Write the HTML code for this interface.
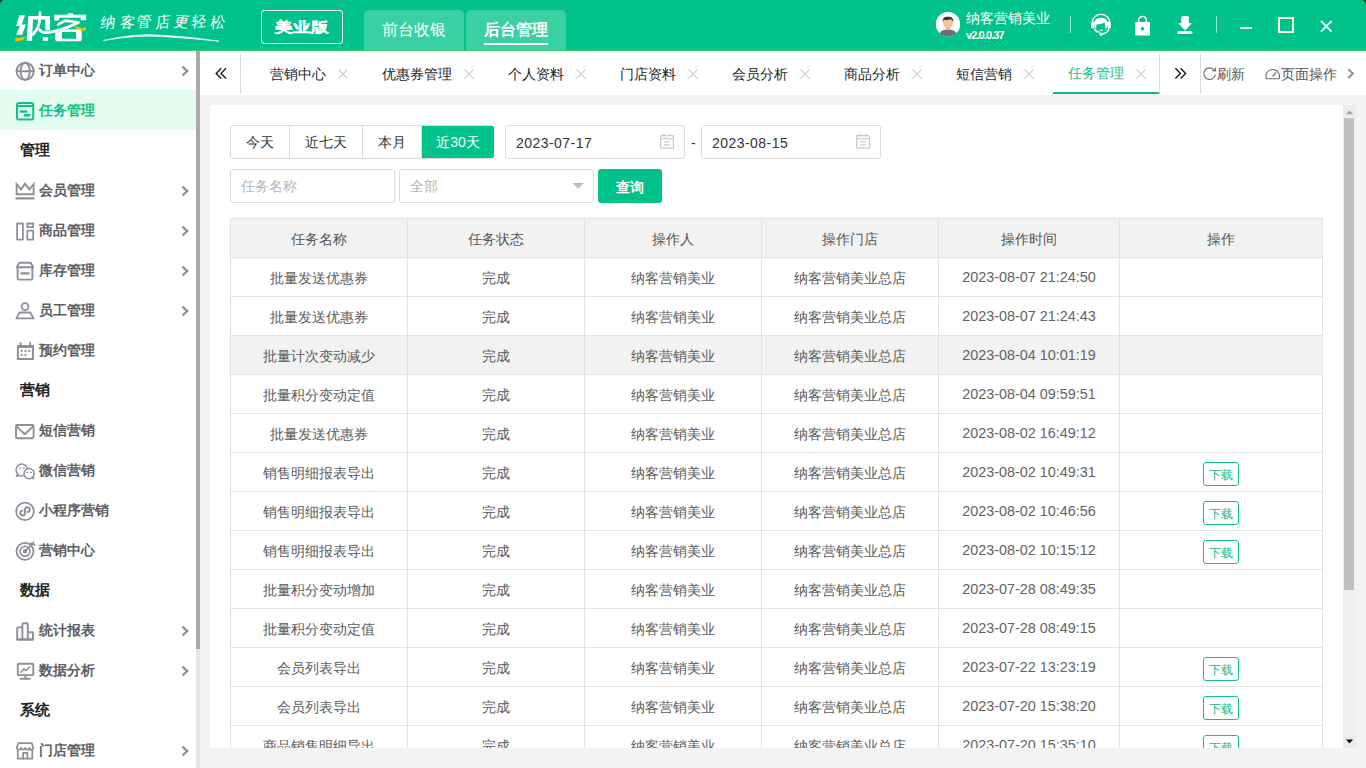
<!DOCTYPE html><html><head><meta charset="utf-8"><style>*{margin:0;padding:0;box-sizing:border-box}
html,body{width:1366px;height:768px;overflow:hidden;background:#f3f3f3;font-family:"Liberation Sans",sans-serif;position:relative}
#hdr{position:absolute;left:0;top:0;width:1366px;height:51px;background:#02c28c;border-bottom:1px solid #3cd06a}
#mybox{position:absolute;left:261px;top:10px;width:82px;height:34px;border:1px solid #fff;border-radius:3px}
#mybox span{position:absolute;left:0;width:80px;top:0;text-align:center;color:#fff;font-size:17.5px;font-weight:bold;line-height:32px;-webkit-text-stroke:0.5px #fff;transform:scaleY(0.8);letter-spacing:0px}
.hbtn{position:absolute;top:10px;height:40px;width:100px;background:#3ad0a2;border-radius:5px 5px 0 0;color:#fff;font-size:16px;text-align:center;line-height:40px}
.hbtn.act{font-weight:bold}
.hbtn.act i{position:absolute;left:18px;top:33px;width:64px;height:2px;background:#fff}
#avatar{position:absolute;left:936px;top:12px;width:24px;height:24px;border-radius:50%;background:#fff}
#uname{position:absolute;left:966px;top:10px;font-size:14px;color:#fff;line-height:16px}
#ver{position:absolute;left:966px;top:29px;font-size:11px;color:#fff;line-height:12px;letter-spacing:-0.9px;font-weight:bold}
.hsep{position:absolute;top:16px;width:1px;height:17px;background:rgba(255,255,255,.6)}
#side{position:absolute;left:0;top:51px;width:196px;height:717px;background:#fff;overflow:hidden}
.mi{position:absolute;left:0;width:196px;height:40px;line-height:40px;font-size:14px;color:#5e5e66;font-weight:bold}
.mi.act{background:#e3fcef;color:#14c08a}
.mi .t{position:absolute;left:39px;top:0}
.mi .ic{position:absolute;left:15px;top:10px;width:20px;height:20px;line-height:0}
.mi svg{display:block}
.mi .ch{position:absolute;left:180px;top:14px;line-height:0}
.sec{position:absolute;left:20px;height:40px;line-height:40px;font-size:15px;color:#222;font-weight:bold}
#sbar{position:absolute;left:196px;top:51px;width:4px;height:717px;background:#e6e6e6;border-radius:2px}
#sthumb{position:absolute;left:196px;top:51px;width:4px;height:598px;background:#aaaaaa}
#tabs{position:absolute;left:200px;top:51px;width:1166px;height:44px;background:#fff}
#dbl,#dbr{position:absolute;top:0;left:14px;line-height:42px;font-size:22px;color:#222}
#dbr{left:973px}
.vsep{position:absolute;top:3px;width:1px;height:40px;background:#ddd}
.tab{position:absolute;top:1px;height:44px;line-height:44px;font-size:14px;color:#1e1e1e;font-weight:300}
.tab.on{color:#14c08a;top:0}
.tx{position:absolute;top:18px}
#uline{position:absolute;left:853px;top:41px;width:106px;height:2px;background:#14b87f}
#refresh{position:absolute;left:1017px;top:1px;font-weight:300;line-height:44px;font-size:14px;color:#555}
#pageop{position:absolute;left:1081px;top:1px;font-weight:300;line-height:44px;font-size:14px;color:#555}
#panel{position:absolute;left:210px;top:105px;width:1133px;height:643px;background:#fff;overflow:hidden}
.bg{position:absolute;height:34px;border:1px solid #dcdcdc;border-radius:3px;background:#fff;font-size:14px;color:#333;font-weight:300}
.bg span{position:absolute;top:0;height:32px;line-height:32px;text-align:center;border-right:1px solid #dcdcdc}
.bg span.on{background:#02c28c;color:#fff;border-right:0;top:0;height:32px;line-height:32px;width:72px!important;border-radius:0 2px 2px 0}
.date{position:absolute;width:180px;height:34px;border:1px solid #dcdcdc;border-radius:3px;padding-left:10px;line-height:34px;font-size:14px;color:#333;letter-spacing:0.45px}
#dash{position:absolute;left:481px;top:21px;line-height:34px;font-size:14px;color:#333}
.inp{position:absolute;height:34px;border:1px solid #dcdcdc;border-radius:3px;background:#fff;font-size:14px;line-height:32px;padding-left:10px}
#query{position:absolute;left:388px;top:64px;width:64px;height:34px;background:#02c28c;border-radius:3px;color:#fff;font-size:14px;font-weight:bold;text-align:center;line-height:36px}
table{position:absolute;left:20px;top:113px;border-collapse:collapse;table-layout:fixed}
td i,th i{font-style:normal;position:relative;top:2px}
td.num{font-size:14.4px;color:#636363}
td.num b{font-weight:normal}
td,th{border:1px solid #e3e3e3;height:39px;text-align:center;font-size:14px;color:#5c5c5c;font-weight:300;padding:0;white-space:nowrap;overflow:hidden}
th{background:#f2f2f2;color:#555}
tr.hov td{background:#f2f2f2}
.dl{display:inline-block;position:relative;top:2px;width:36px;height:24px;border:1px solid #14c08a;border-radius:3px;color:#14b985;font-size:12px;line-height:22px;text-align:center;vertical-align:middle}
.dl i{top:1px!important}
#vscroll{position:absolute;left:1343px;top:105px;width:13px;height:643px;background:#f0f0f0}
#vscroll .thumb{position:absolute;left:1px;top:13px;width:10px;height:472px;background:#c0c0c0}
#tagline{position:absolute;left:0;top:0}
#tagline span{position:absolute;top:11px;height:22px;line-height:22px;text-align:center;font-family:"Liberation Serif",serif;font-size:15px;font-weight:200;color:#fff}
</style></head><body>
<div id="hdr">
<svg id="logo" width="240" height="50" viewBox="0 0 240 50" style="position:absolute;left:0;top:0"><g fill="#fff"><path d="M19.3 15.3H25L21.8 24.6H26L22.1 34.7H16.3L19.7 26.1H16.1Z"/><path d="M28.4 16H33.2L32 40.8H26.5Z"/><path d="M28.4 16H50V30.6H45.3V19.6H28.4Z"/><rect x="42.8" y="36.9" width="5.3" height="3.9"/><path d="M54.3 14.7H67.8V13.3H73V14.7H86.1V20.2H80.8V17.8H59.2V20.5H54.3Z"/><path fill-rule="evenodd" d="M57 29.2H80Q81.7 29.2 81.7 31V39.5Q81.7 41.3 80 41.3H57Q55.2 41.3 55.2 39.5V31Q55.2 29.2 57 29.2ZM62 32.1V38.8H76V32.1Z"/></g><g fill="none" stroke="#fff" stroke-linecap="round"><path d="M40.1 12.6L39.6 20Q39 28 33 34.5" stroke-width="2.8"/><path d="M58 24.6L65.3 20.6L78.2 22.2" stroke-width="2.6"/><path d="M78.4 22.5Q61 31 47 32.6Q41.5 33 38.8 29" stroke-width="3" stroke="#02c28c"/><path d="M78.4 22.5Q61 31 47 32.6Q41.5 33 38.8 29" stroke-width="2.8"/></g><path d="M15 38.2Q20 38 25.5 36.4Q24.5 39.5 20.5 40.8Q17.5 41.5 15.2 41.2Z" fill="#f6bd00"/><path d="M74 26.3Q78 26 80.5 27.8Q83 28.4 86.1 27.3L85.7 30.6Q81.5 30.8 78.5 29.6Q76 28.5 74 26.3Z" fill="#f6bd00"/><path d="M103.5 40.5Q135 33 161.5 35.2Q190 36.5 219 41.2Q190 38.2 161.5 36.4Q135 35 103.5 40.5Z" fill="#fff" stroke="#fff" stroke-width="0.7"/></svg>
<div id="tagline"><span style="left:99.6px;width:16.4px;transform:rotate(-4deg) skewX(-10deg)">纳</span><span style="left:118.6px;width:16.4px;transform:rotate(3deg) skewX(-10deg)">客</span><span style="left:137.0px;width:15.0px;transform:rotate(-3deg) skewX(-10deg)">管</span><span style="left:155.0px;width:15.0px;transform:rotate(-6deg) skewX(-10deg)">店</span><span style="left:173.5px;width:15.5px;transform:rotate(4deg) skewX(-10deg)">更</span><span style="left:191.4px;width:16.3px;transform:rotate(-3deg) skewX(-10deg)">轻</span><span style="left:209.8px;width:16.2px;transform:rotate(-5deg) skewX(-10deg)">松</span></div>
<div id="mybox"><span>美业版</span></div>
<div class="hbtn" style="left:364px">前台收银</div>
<div class="hbtn act" style="left:466px">后台管理<i></i></div>
<div id="avatar"></div>
<div id="uname">纳客营销美业</div><div id="ver">v2.0.0.37</div>
<div class="hsep" style="left:1070px"></div><div class="hsep" style="left:1216px"></div>
<svg id="hicons" width="1366" height="50" viewBox="0 0 1366 50" style="position:absolute;left:0;top:0"><g fill="none" stroke="#fff" stroke-width="1.5"><path d="M1092.2 23A8.8 8.8 0 0 1 1109.8 23"/><path d="M1094.3 28.5Q1096 32.5 1099.5 31.8"/><path d="M1109 28Q1108.5 33 1101.2 34.3"/></g><g fill="#fff"><rect x="1091" y="22" width="3.4" height="6.2" rx="1"/><rect x="1107.5" y="22" width="3.4" height="6.2" rx="1"/><path d="M1094.2 24.5Q1094 17.8 1101 17.8Q1108 17.8 1107.6 24.5L1106 30.5Q1105.2 26 1104.4 22.3Q1102 24.5 1096.5 24.6Q1096 26.5 1096.3 29.2Q1094.5 27.5 1094.2 24.5Z"/><circle cx="1101" cy="34.2" r="1.6"/><rect x="1099.5" y="29.7" width="3.5" height="0.9"/></g><path d="M1138.6 22.5V20.3A3.9 3.9 0 0 1 1146.4 20.3V22.5" fill="none" stroke="#fff" stroke-width="1.5"/><rect x="1135.1" y="22" width="14.9" height="13.4" rx="1" fill="#fff"/><circle cx="1142.6" cy="28.7" r="1.7" fill="#02c28c"/><path d="M1181.3 23.3V17.4Q1181.3 15.9 1182.8 15.9H1187.4Q1188.9 15.9 1188.9 17.4V23.3H1191.8L1185.1 30.5L1178.2 23.3Z" fill="#fff"/><rect x="1177.4" y="31" width="15.1" height="3.1" rx="1.5" fill="#fff"/><rect x="1240" y="27" width="12" height="2" fill="#fff"/><rect x="1279" y="18" width="14" height="14" fill="none" stroke="#fffbe0" stroke-width="2"/><path d="M1321 21L1331.6 31.6M1331.6 21L1321 31.6" stroke="#fff" stroke-width="1.8"/><circle cx="948" cy="24.5" r="12" fill="#fff"/><path d="M939.5 33.5Q941 29.5 948 29.5Q955 29.5 956.5 33.5Q953 36.5 948 36.5Q943 36.5 939.5 33.5Z" fill="#6d6d7c"/><rect x="946" y="26.5" width="4" height="3.5" fill="#eab792"/><ellipse cx="948" cy="22.8" rx="5" ry="5.6" fill="#f4c29f"/><path d="M942.5 22.5Q942 16.5 948 16.8Q954 16.5 953.5 22.5Q952.8 19.5 950.5 19.3Q947 20.5 944 19.8Q943 20.5 942.5 22.5Z" fill="#333"/></svg>
<svg width="1366" height="5" style="position:absolute;left:0;top:0"><path d="M0 0H4Q2 0.3 1 1.5Q0.2 2.5 0 4Z" fill="#2b1f1a"/><path d="M1366 0H1362Q1364 0.3 1365 1.5Q1365.8 2.5 1366 4Z" fill="#2b1f1a"/></svg>
</div>
<div id="side">
<div class="mi" style="top:-1px"><span class="ic"><svg width="20" height="20" viewBox="0 0 20 20" style="overflow:visible" fill="none" stroke="#8f8f9a" stroke-width="1.9" stroke-linecap="round" stroke-linejoin="round"><circle cx="10.2" cy="11.3" r="8.6"/><ellipse cx="10.2" cy="11.3" rx="4.6" ry="8.6"/><path d="M1.6 11.3h17.2"/></svg></span><span class="t">订单中心</span><span class="ch"><svg width="10" height="14" viewBox="0 0 10 14"><path d="M2.5 2.7L7.2 7.1L2.5 11.5" fill="none" stroke="#8e8e9a" stroke-width="2.3"/></svg></span></div>
<div class="mi act" style="top:39px"><span class="ic"><svg width="20" height="20" viewBox="0 0 20 20" style="overflow:visible" fill="none" stroke="#14c08a" stroke-width="2" stroke-linecap="round" stroke-linejoin="round"><rect x="2" y="3" width="16.2" height="16.6" rx="2.2"/><path d="M2 6h16.2"/><path d="M5.8 11.5h5.4M9.8 15.2h4.6" stroke-width="2.4"/></svg></span><span class="t">任务管理</span></div>
<div class="sec" style="top:79px">管理</div>
<div class="mi" style="top:119px"><span class="ic"><svg width="20" height="20" viewBox="0 0 20 20" style="overflow:visible" fill="none" stroke="#8f8f9a" stroke-width="1.9" stroke-linecap="round" stroke-linejoin="round"><path d="M1.6 14.2V4.2L6 9.4L10 3.6L14.4 9.4L18.6 4.2V14.2Z" stroke-linejoin="miter" stroke-linecap="butt"/><path d="M1.6 18.4h17" stroke-width="2.3"/></svg></span><span class="t">会员管理</span><span class="ch"><svg width="10" height="14" viewBox="0 0 10 14"><path d="M2.5 2.7L7.2 7.1L2.5 11.5" fill="none" stroke="#8e8e9a" stroke-width="2.3"/></svg></span></div>
<div class="mi" style="top:159px"><span class="ic"><svg width="20" height="20" viewBox="0 0 20 20" style="overflow:visible" fill="none" stroke="#8f8f9a" stroke-width="1.8" stroke-linecap="round" stroke-linejoin="round"><rect x="2.1" y="3.5" width="5.8" height="16.1"/><rect x="12.3" y="3.5" width="5.9" height="3.6"/><rect x="12.3" y="10.7" width="5.9" height="8.9"/></svg></span><span class="t">商品管理</span><span class="ch"><svg width="10" height="14" viewBox="0 0 10 14"><path d="M2.5 2.7L7.2 7.1L2.5 11.5" fill="none" stroke="#8e8e9a" stroke-width="2.3"/></svg></span></div>
<div class="mi" style="top:199px"><span class="ic"><svg width="20" height="20" viewBox="0 0 20 20" style="overflow:visible" fill="none" stroke="#8f8f9a" stroke-width="1.9" stroke-linecap="round" stroke-linejoin="round"><path d="M4.3 2.8H15.7L18.2 7.3H1.8Z"/><path d="M2.6 7.5V18.2Q2.6 19.6 4 19.6H16Q17.4 19.6 17.4 18.2V7.5"/><path d="M6.5 13.4h7" stroke-width="2.4"/></svg></span><span class="t">库存管理</span><span class="ch"><svg width="10" height="14" viewBox="0 0 10 14"><path d="M2.5 2.7L7.2 7.1L2.5 11.5" fill="none" stroke="#8e8e9a" stroke-width="2.3"/></svg></span></div>
<div class="mi" style="top:239px"><span class="ic"><svg width="20" height="20" viewBox="0 0 20 20" style="overflow:visible" fill="none" stroke="#8f8f9a" stroke-width="1.8" stroke-linecap="round" stroke-linejoin="round"><circle cx="10" cy="6.6" r="3.5"/><path d="M4.8 12.5H15.2L18.6 18.4H1.4Z"/></svg></span><span class="t">员工管理</span><span class="ch"><svg width="10" height="14" viewBox="0 0 10 14"><path d="M2.5 2.7L7.2 7.1L2.5 11.5" fill="none" stroke="#8e8e9a" stroke-width="2.3"/></svg></span></div>
<div class="mi" style="top:279px"><span class="ic"><svg width="20" height="20" viewBox="0 0 20 20" style="overflow:visible"><rect x="2.9" y="6" width="15" height="13" fill="none" stroke="#8f8f9a" stroke-width="2"/><rect x="2" y="5" width="16.9" height="3" fill="#8f8f9a"/><rect x="4.6" y="2.2" width="1.9" height="3" fill="#8f8f9a"/><rect x="14.2" y="2.2" width="1.9" height="3" fill="#8f8f9a"/><g fill="#8f8f9a"><rect x="5.7" y="9.9" width="2" height="2"/><rect x="9.5" y="9.9" width="2" height="2"/><rect x="13.2" y="9.9" width="2" height="2"/><rect x="5.7" y="13.9" width="2" height="2"/><rect x="9.5" y="13.9" width="2" height="2"/></g></svg></span><span class="t">预约管理</span></div>
<div class="sec" style="top:319px">营销</div>
<div class="mi" style="top:359px"><span class="ic"><svg width="20" height="20" viewBox="0 0 20 20" style="overflow:visible" fill="none" stroke="#8f8f9a" stroke-width="1.9" stroke-linecap="round" stroke-linejoin="round"><rect x="1" y="5" width="17.6" height="13.2" rx="1.2"/><path d="M1.8 6.6L9.8 14.2L17.8 6.6"/></svg></span><span class="t">短信营销</span></div>
<div class="mi" style="top:399px"><span class="ic"><svg width="20" height="20" viewBox="0 0 20 20" style="overflow:visible" fill="none" stroke="#8f8f9a" stroke-width="1.5" stroke-linecap="round" stroke-linejoin="round"><ellipse cx="6.8" cy="10" rx="5.7" ry="6"/><path d="M2.8 14.2L1.4 16.4L4.4 15.6" stroke-width="1.4"/><circle cx="14.1" cy="13.6" r="5.1" fill="#fff"/><path d="M17.8 17L18.8 18.6L17 18.2" stroke-width="1.4"/><path d="M4.9 8.3h.6M8.6 8.3h.6M11.7 12.4h.7M15.6 12.4h.7" stroke-width="1.4"/></svg></span><span class="t">微信营销</span></div>
<div class="mi" style="top:439px"><span class="ic"><svg width="20" height="20" viewBox="0 0 20 20" style="overflow:visible" fill="none" stroke="#8f8f9a" stroke-width="1.8" stroke-linecap="round" stroke-linejoin="round"><circle cx="10" cy="11.4" r="8.8"/><path d="M7.6 10.6A2.4 2.4 0 1 0 10 13V9.6A2.4 2.4 0 1 1 12.6 12" stroke-width="1.9"/></svg></span><span class="t">小程序营销</span></div>
<div class="mi" style="top:479px"><span class="ic"><svg width="20" height="20" viewBox="0 0 20 20" style="overflow:visible" fill="none" stroke="#8f8f9a" stroke-width="1.8" stroke-linecap="round" stroke-linejoin="round"><circle cx="10" cy="11.3" r="8.5"/><circle cx="10" cy="11.3" r="4.9"/><circle cx="10" cy="11.3" r="1.3" fill="#8f8f9a"/><path d="M10 11.3L17.5 3.8"/><path d="M15.3 3.3L17.6 3.6L18.6 2.1L18.2 4.7L19.8 5.3" stroke-width="1.5"/></svg></span><span class="t">营销中心</span></div>
<div class="sec" style="top:519px">数据</div>
<div class="mi" style="top:559px"><span class="ic"><svg width="20" height="20" viewBox="0 0 20 20" style="overflow:visible" fill="none" stroke="#8f8f9a" stroke-width="1.9" stroke-linecap="round" stroke-linejoin="round"><path d="M2.2 19.5V8.4Q2.2 7.4 3.2 7.4H7.4V19.5ZM7.4 19.5V4.3Q7.4 3.3 8.4 3.3H11.8Q12.8 3.3 12.8 4.3V19.5ZM12.8 19.5V12.2H17.9V19.5Z"/><path d="M2.2 19.5H17.9"/></svg></span><span class="t">统计报表</span><span class="ch"><svg width="10" height="14" viewBox="0 0 10 14"><path d="M2.5 2.7L7.2 7.1L2.5 11.5" fill="none" stroke="#8e8e9a" stroke-width="2.3"/></svg></span></div>
<div class="mi" style="top:599px"><span class="ic"><svg width="20" height="20" viewBox="0 0 20 20" style="overflow:visible" fill="none" stroke="#8f8f9a" stroke-width="1.9" stroke-linecap="round" stroke-linejoin="round"><rect x="2.8" y="3.8" width="15.5" height="11.3" rx="0.8"/><path d="M10.4 15.5V18.6M5.6 18.8H14.8" /><path d="M5.8 12.3L9 8.8L11 10.6L14.4 7.1" stroke-width="1.5"/></svg></span><span class="t">数据分析</span><span class="ch"><svg width="10" height="14" viewBox="0 0 10 14"><path d="M2.5 2.7L7.2 7.1L2.5 11.5" fill="none" stroke="#8e8e9a" stroke-width="2.3"/></svg></span></div>
<div class="sec" style="top:639px">系统</div>
<div class="mi" style="top:679px"><span class="ic"><svg width="20" height="20" viewBox="0 0 20 20" style="overflow:visible" fill="none" stroke="#8f8f9a" stroke-width="1.8" stroke-linecap="round" stroke-linejoin="round"><path d="M3.3 3.2H16.8L18.3 7.6V8.3Q18.2 9.6 16.6 9.6Q14.6 9.6 14.4 7.8Q14.2 9.6 12.4 9.6Q10.6 9.6 10.3 7.8Q10 9.6 8.2 9.6Q6.4 9.6 6.1 7.8Q5.8 9.6 3.8 9.6Q2.2 9.6 1.8 8.3V7.6Z"/><path d="M2.8 9.6V18.6H17.3V9.6"/><path d="M8.1 18.6V12.8H12.4V18.6"/></svg></span><span class="t">门店管理</span><span class="ch"><svg width="10" height="14" viewBox="0 0 10 14"><path d="M2.5 2.7L7.2 7.1L2.5 11.5" fill="none" stroke="#8e8e9a" stroke-width="2.3"/></svg></span></div>
</div>
<div id="sbar"></div><div id="sthumb"></div>
<div id="tabs">
<svg style="position:absolute;left:0;top:0" width="60" height="44" viewBox="200 51 60 44" fill="none" stroke="#1a1a1a" stroke-width="1.4"><path d="M221.2 68.2L216.2 73.4L221.2 78.6M226 68.2L221 73.4L226 78.6"/></svg><div class="vsep" style="left:40px"></div>
<div class="tab" style="left:70px">营销中心</div><svg class="tx" style="left:138px" width="10" height="10" viewBox="0 0 10 10"><path d="M0.6 0.6L9.4 9.4M9.4 0.6L0.6 9.4" stroke="#c6c6c6" stroke-width="1.1"/></svg>
<div class="tab" style="left:182px">优惠券管理</div><svg class="tx" style="left:264px" width="10" height="10" viewBox="0 0 10 10"><path d="M0.6 0.6L9.4 9.4M9.4 0.6L0.6 9.4" stroke="#c6c6c6" stroke-width="1.1"/></svg>
<div class="tab" style="left:308px">个人资料</div><svg class="tx" style="left:376px" width="10" height="10" viewBox="0 0 10 10"><path d="M0.6 0.6L9.4 9.4M9.4 0.6L0.6 9.4" stroke="#c6c6c6" stroke-width="1.1"/></svg>
<div class="tab" style="left:420px">门店资料</div><svg class="tx" style="left:488px" width="10" height="10" viewBox="0 0 10 10"><path d="M0.6 0.6L9.4 9.4M9.4 0.6L0.6 9.4" stroke="#c6c6c6" stroke-width="1.1"/></svg>
<div class="tab" style="left:532px">会员分析</div><svg class="tx" style="left:600px" width="10" height="10" viewBox="0 0 10 10"><path d="M0.6 0.6L9.4 9.4M9.4 0.6L0.6 9.4" stroke="#c6c6c6" stroke-width="1.1"/></svg>
<div class="tab" style="left:644px">商品分析</div><svg class="tx" style="left:712px" width="10" height="10" viewBox="0 0 10 10"><path d="M0.6 0.6L9.4 9.4M9.4 0.6L0.6 9.4" stroke="#c6c6c6" stroke-width="1.1"/></svg>
<div class="tab" style="left:756px">短信营销</div><svg class="tx" style="left:824px" width="10" height="10" viewBox="0 0 10 10"><path d="M0.6 0.6L9.4 9.4M9.4 0.6L0.6 9.4" stroke="#c6c6c6" stroke-width="1.1"/></svg>
<div class="tab on" style="left:868px">任务管理</div><svg class="tx" style="left:936px" width="10" height="10" viewBox="0 0 10 10"><path d="M0.6 0.6L9.4 9.4M9.4 0.6L0.6 9.4" stroke="#c6c6c6" stroke-width="1.1"/></svg>
<div id="uline"></div>
<div class="vsep" style="left:959px"></div><svg style="position:absolute;left:960px;top:0" width="40" height="44" viewBox="1160 51 40 44" fill="none" stroke="#1a1a1a" stroke-width="1.4"><path d="M1175.4 68.2L1180.4 73.4L1175.4 78.6M1180.6 68.2L1185.6 73.4L1180.6 78.6"/></svg><div class="vsep" style="left:1000px"></div>
<div id="refresh">刷新</div><div id="pageop">页面操作</div>
<svg width="1166" height="44" viewBox="200 51 1166 44" style="position:absolute;left:0;top:0" fill="none"><path d="M1214.3 70.2A5.8 5.8 0 1 0 1215.4 74.6" stroke="#6a6a6a" stroke-width="1.1"/><path d="M1212.3 70.6L1215.6 70.9L1215.3 67.5" stroke="#6a6a6a" stroke-width="1.1"/><path d="M1266.4 78.8A6.8 6.8 0 1 1 1279 78.8Z" stroke="#6a6a6a" stroke-width="1.1"/><path d="M1272.6 76.5L1276.2 72.3" stroke="#6a6a6a" stroke-width="1.2"/><path d="M1348.2 69.2L1353 73.6L1348.2 78" stroke="#8e8e9a" stroke-width="2"/></svg>
</div>
<div id="panel">
<div class="bg" style="left:20px;top:20px;width:264px"><span style="left:0;width:59px">今天</span><span style="left:59px;width:73px">近七天</span><span style="left:132px;width:59px">本月</span><span class="on" style="left:191px;width:73px">近30天</span></div>
<div class="date" style="left:295px;top:20px">2023-07-17<i class="cal"></i></div>
<div id="dash">-</div>
<div class="date" style="left:491px;top:20px">2023-08-15<i class="cal"></i></div>
<div class="inp" style="left:20px;top:64px;width:165px;color:#b5b5b5">任务名称</div>
<div class="inp" style="left:189px;top:64px;width:195px;color:#b5b5b5">全部<i class="caret"></i></div>
<div id="query">查询</div>
<svg width="1133" height="120" viewBox="210 105 1133 120" style="position:absolute;left:0;top:0" fill="none" stroke="#c9c9c9" stroke-width="1.2"><rect x="660.6" y="135.6" width="12.8" height="12.6" rx="0.8"/><path d="M660.6 138.6H673.4M664 133.2V136.4M670 133.2V136.4M664.2 141.8H669.8M664.2 144.8H669.8"/><rect x="856.6" y="135.6" width="12.8" height="12.6" rx="0.8"/><path d="M856.6 138.6H869.4M860 133.2V136.4M866 133.2V136.4M860.2 141.8H865.8M860.2 144.8H865.8"/><path d="M572.4 183H583.8L578.1 188.7Z" fill="#bdbdbd" stroke="none"/></svg>
<table><colgroup><col style="width:177px"><col style="width:177px"><col style="width:177px"><col style="width:177px"><col style="width:181px"><col style="width:203px"></colgroup>
<tr><th><i>任务名称</i></th><th><i>任务状态</i></th><th><i>操作人</i></th><th><i>操作门店</i></th><th><i>操作时间</i></th><th><i>操作</i></th></tr>
<tr><td><i>批量发送优惠券</i></td><td><i>完成</i></td><td><i>纳客营销美业</i></td><td><i>纳客营销美业总店</i></td><td class="num"><b>2023-08-07 21:24:50</b></td><td></td></tr>
<tr><td><i>批量发送优惠券</i></td><td><i>完成</i></td><td><i>纳客营销美业</i></td><td><i>纳客营销美业总店</i></td><td class="num"><b>2023-08-07 21:24:43</b></td><td></td></tr>
<tr class="hov"><td><i>批量计次变动减少</i></td><td><i>完成</i></td><td><i>纳客营销美业</i></td><td><i>纳客营销美业总店</i></td><td class="num"><b>2023-08-04 10:01:19</b></td><td></td></tr>
<tr><td><i>批量积分变动定值</i></td><td><i>完成</i></td><td><i>纳客营销美业</i></td><td><i>纳客营销美业总店</i></td><td class="num"><b>2023-08-04 09:59:51</b></td><td></td></tr>
<tr><td><i>批量发送优惠券</i></td><td><i>完成</i></td><td><i>纳客营销美业</i></td><td><i>纳客营销美业总店</i></td><td class="num"><b>2023-08-02 16:49:12</b></td><td></td></tr>
<tr><td><i>销售明细报表导出</i></td><td><i>完成</i></td><td><i>纳客营销美业</i></td><td><i>纳客营销美业总店</i></td><td class="num"><b>2023-08-02 10:49:31</b></td><td><span class="dl"><i>下载</i></span></td></tr>
<tr><td><i>销售明细报表导出</i></td><td><i>完成</i></td><td><i>纳客营销美业</i></td><td><i>纳客营销美业总店</i></td><td class="num"><b>2023-08-02 10:46:56</b></td><td><span class="dl"><i>下载</i></span></td></tr>
<tr><td><i>销售明细报表导出</i></td><td><i>完成</i></td><td><i>纳客营销美业</i></td><td><i>纳客营销美业总店</i></td><td class="num"><b>2023-08-02 10:15:12</b></td><td><span class="dl"><i>下载</i></span></td></tr>
<tr><td><i>批量积分变动增加</i></td><td><i>完成</i></td><td><i>纳客营销美业</i></td><td><i>纳客营销美业总店</i></td><td class="num"><b>2023-07-28 08:49:35</b></td><td></td></tr>
<tr><td><i>批量积分变动定值</i></td><td><i>完成</i></td><td><i>纳客营销美业</i></td><td><i>纳客营销美业总店</i></td><td class="num"><b>2023-07-28 08:49:15</b></td><td></td></tr>
<tr><td><i>会员列表导出</i></td><td><i>完成</i></td><td><i>纳客营销美业</i></td><td><i>纳客营销美业总店</i></td><td class="num"><b>2023-07-22 13:23:19</b></td><td><span class="dl"><i>下载</i></span></td></tr>
<tr><td><i>会员列表导出</i></td><td><i>完成</i></td><td><i>纳客营销美业</i></td><td><i>纳客营销美业总店</i></td><td class="num"><b>2023-07-20 15:38:20</b></td><td><span class="dl"><i>下载</i></span></td></tr>
<tr><td><i>商品销售明细导出</i></td><td><i>完成</i></td><td><i>纳客营销美业</i></td><td><i>纳客营销美业总店</i></td><td class="num"><b>2023-07-20 15:35:10</b></td><td><span class="dl"><i>下载</i></span></td></tr>
</table>
</div>
<div id="vscroll"><div class="thumb"></div><svg width="13" height="643" style="position:absolute;left:0;top:0"><rect x="0" y="0" width="13" height="12" fill="#ebebeb"/><path d="M2.9 9.3H10.1L6.5 5.6Z" fill="#a3a3a3"/><rect x="0" y="631" width="13" height="12" fill="#ebebeb"/><path d="M2.9 634.5H10.1L6.5 638.2Z" fill="#000"/></svg></div>
</body></html>
